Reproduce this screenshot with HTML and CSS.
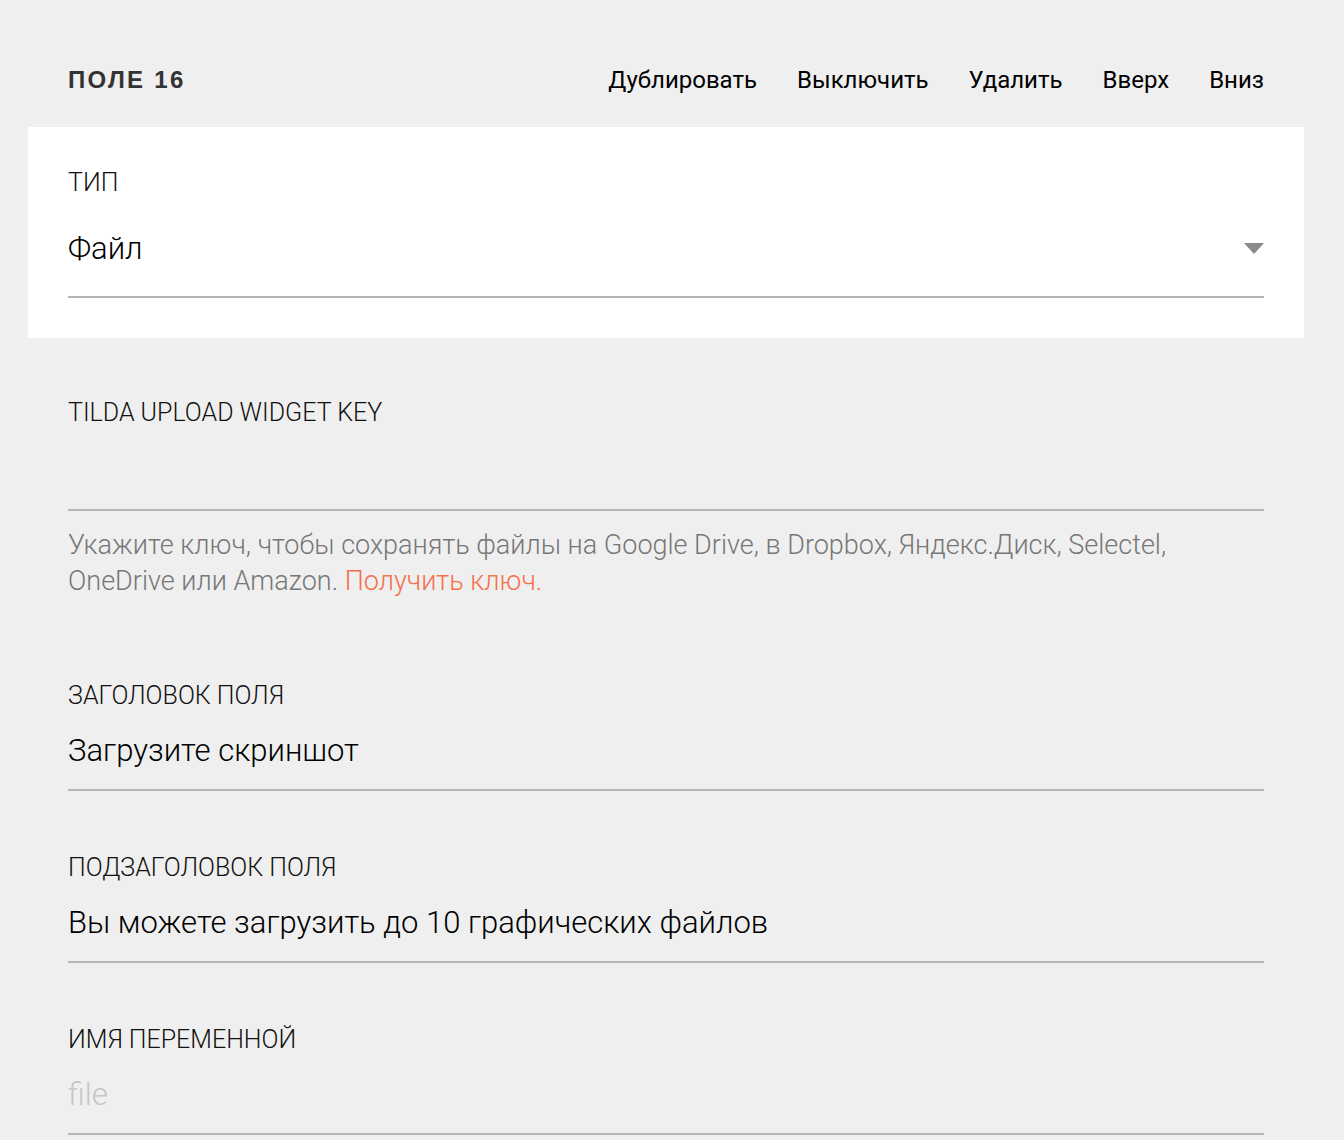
FILE: index.html
```html
<!DOCTYPE html>
<html lang="ru">
<head>
<meta charset="utf-8">
<title>Поле 16</title>
<link rel="stylesheet" href="styles.css">
</head>
<body>
<div class="page">
  <header class="head">
    <div class="title">ПОЛЕ 16</div>
    <nav class="actions">
      <a>Дублировать</a>
      <a>Выключить</a>
      <a>Удалить</a>
      <a>Вверх</a>
      <a>Вниз</a>
    </nav>
  </header>

  <section class="card">
    <div class="label">ТИП</div>
    <div class="select">
      <span class="value">Файл</span>
      <svg class="arrow" width="20" height="11" viewBox="0 0 20 11"><polygon points="0,0 20,0 10,11" fill="#8a8a8a"/></svg>
    </div>
  </section>

  <div class="fields">
    <div class="field key">
      <div class="label">TILDA UPLOAD WIDGET KEY</div>
      <div class="input empty"></div>
      <p class="hint">Укажите ключ, чтобы сохранять файлы на Google Drive, в Dropbox, Яндекс.Диск, Selectel, OneDrive или Amazon. <span class="link">Получить ключ.</span></p>
    </div>
    <div class="field">
      <div class="label">ЗАГОЛОВОК ПОЛЯ</div>
      <div class="input">Загрузите скриншот</div>
    </div>
    <div class="field">
      <div class="label">ПОДЗАГОЛОВОК ПОЛЯ</div>
      <div class="input">Вы можете загрузить до 10 графических файлов</div>
    </div>
    <div class="field">
      <div class="label">ИМЯ ПЕРЕМЕННОЙ</div>
      <div class="input placeholder">file</div>
    </div>
  </div>
</div>
</body>
</html>
```

FILE: styles.css
```css
html, body {
  margin: 0;
  padding: 0;
  background: #efefef;
}
body {
  font-family: Roboto, "Liberation Sans", Arial, sans-serif;
  color: #000;
}
.page {
  padding: 0 40px 0 28px;
}
.head {
  display: flex;
  align-items: center;
  justify-content: space-between;
  height: 127px;
  padding: 33px 40px 0 40px;
  box-sizing: border-box;
}
.title {
  font-family: "Liberation Sans", Arial, sans-serif;
  font-weight: 700;
  font-size: 24px;
  letter-spacing: 2.3px;
  color: #333;
}
.actions {
  display: flex;
  gap: 40px;
}
.actions a {
  font-size: 24px;
  font-weight: 400;
  color: #000;
  cursor: pointer;
}
.card {
  background: #fff;
  padding: 43px 40px 40px;
}
.label {
  font-size: 25px;
  line-height: 26px;
  font-weight: 300;
  color: #111;
}
.select {
  display: flex;
  align-items: center;
  justify-content: space-between;
  margin-top: 31px;
  padding-bottom: 25px;
  border-bottom: 2px solid #b6b6b6;
}
.value {
  font-size: 31px;
  line-height: 44px;
  font-weight: 300;
}
.arrow {
  display: block;
  margin-top: -2px;
}
.fields {
  padding: 0 40px;
}
.field {
  padding-top: 64px;
}
.field.key {
  padding-top: 62px;
}
.input {
  margin-top: 20px;
  height: 44px;
  padding-bottom: 16px;
  font-size: 31px;
  line-height: 44px;
  font-weight: 300;
  border-bottom: 2px solid #b6b6b6;
}
.input.empty {
  margin-top: 18px;
  padding-bottom: 21px;
}
.input.placeholder {
  color: #c6c6c6;
}
.hint {
  margin: 16px 0 20px;
  font-size: 27px;
  line-height: 36px;
  font-weight: 300;
  color: #777;
}
.link {
  color: #f4714b;
  cursor: pointer;
}
```
